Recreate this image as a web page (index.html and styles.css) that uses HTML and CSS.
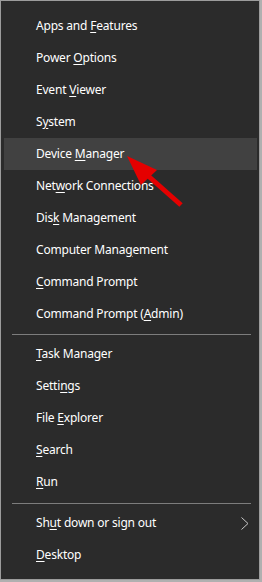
FILE: index.html
```html
<!DOCTYPE html>
<html lang="en">
<head>
    <meta charset="UTF-8">
    <meta name="viewport" content="width=device-width, initial-scale=1.0">
    <title>Quick Link Menu</title>
    <link rel="stylesheet" href="styles.css">
</head>
<body>
    <div class="menu">
        <ul class="group">
            <li class="item">Apps and <u>F</u>eatures</li>
            <li class="item">Power <u>O</u>ptions</li>
            <li class="item">Event <u>V</u>iewer</li>
            <li class="item">S<u>y</u>stem</li>
            <li class="item active">Device <u>M</u>anager</li>
            <li class="item">Net<u>w</u>ork Connections</li>
            <li class="item">Dis<u>k</u> Management</li>
            <li class="item">Computer Mana<u>g</u>ement</li>
            <li class="item"><u>C</u>ommand Prompt</li>
            <li class="item">Command Prompt (<u>A</u>dmin)</li>
        </ul>
        <div class="sep"></div>
        <ul class="group">
            <li class="item"><u>T</u>ask Manager</li>
            <li class="item">Setti<u>n</u>gs</li>
            <li class="item">File <u>E</u>xplorer</li>
            <li class="item"><u>S</u>earch</li>
            <li class="item"><u>R</u>un</li>
        </ul>
        <div class="sep sep-low"></div>
        <ul class="group">
            <li class="item has-sub">
                <span>Sh<u>u</u>t down or sign out</span>
                <svg class="chevron" width="8" height="13" viewBox="0 0 8 13">
                    <polyline points="0.5,0.5 7,6.5 0.5,12.5" fill="none" stroke="#c8c8c8" stroke-width="1"/>
                </svg>
            </li>
            <li class="item"><u>D</u>esktop</li>
        </ul>
    </div>

    <!-- red pointer drawn over the menu -->
    <svg class="pointer" width="262" height="582" viewBox="0 0 262 582">
        <line x1="146" y1="174" x2="181" y2="205" stroke="#e50000" stroke-width="5"/>
        <polygon points="127,156 157,170 141,185" fill="#e50000"/>
    </svg>
</body>
</html>
```

FILE: styles.css
```css
body {
    margin: 0;
    background: #b0b0b0;
    font-family: 'Noto Sans', 'Open Sans', sans-serif;
}

.menu {
    width: 260px;
    height: 580px;
    background: #2b2b2b;
    border: 1px solid #9c9c9c;
    padding: 9px 2px 8px 3px;
    box-sizing: border-box;
}

.group {
    list-style: none;
    margin: 0;
    padding: 0;
}

.item {
    height: 32px;
    line-height: 32px;
    padding: 0 8px 0 32px;
    color: #fff;
    font-size: 12px;
    letter-spacing: -0.2px;
    white-space: nowrap;
}

.item u {
    text-underline-offset: 2px;
}

.item.active {
    background: #414141;
}

.has-sub {
    display: flex;
    align-items: center;
    justify-content: space-between;
}

.sep {
    height: 1px;
    background: #7d7d7d;
    margin: 4px 6px 3px 8px;
}

.sep-low {
    margin-top: 5px;
}

.chevron {
    display: block;
}

.pointer {
    position: absolute;
    top: 0;
    left: 0;
}
```
